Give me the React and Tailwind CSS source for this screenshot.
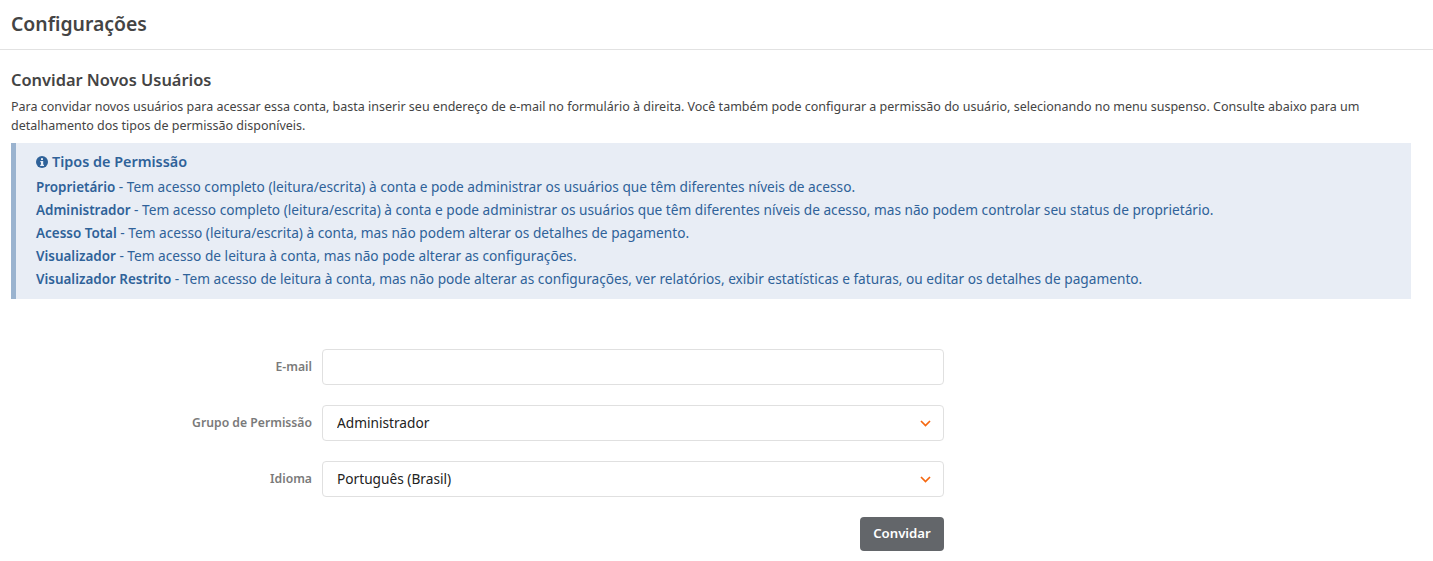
import React from 'react';

const permissions = [
    ['Proprietário', ' - Tem acesso completo (leitura/escrita) à conta e pode administrar os usuários que têm diferentes níveis de acesso.'],
    ['Administrador', ' - Tem acesso completo (leitura/escrita) à conta e pode administrar os usuários que têm diferentes níveis de acesso, mas não podem controlar seu status de proprietário.'],
    ['Acesso Total', ' - Tem acesso (leitura/escrita) à conta, mas não podem alterar os detalhes de pagamento.'],
    ['Visualizador', ' - Tem acesso de leitura à conta, mas não pode alterar as configurações.'],
    ['Visualizador Restrito', ' - Tem acesso de leitura à conta, mas não pode alterar as configurações, ver relatórios, exibir estatísticas e faturas, ou editar os detalhes de pagamento.'],
];

function Chevron() {
    return (
        <svg className="absolute right-[13px] top-[15px] pointer-events-none" width="11" height="7" viewBox="0 0 11 7" fill="none">
            <path d="M1 1L5.5 5.5L10 1" stroke="#f5670f" strokeWidth="1.7" />
        </svg>
    );
}

function Row({ label, children }) {
    return (
        <div className="flex items-start mb-5">
            <label className="w-[322px] pr-[10px] text-right text-[12.2px] font-semibold text-[#7a7a7a] leading-[36px]">{label}</label>
            <div className="relative w-[622px]">{children}</div>
        </div>
    );
}

export default function App() {
    const fieldClass = "w-full h-9 px-[14px] border border-[#e0e0e0] rounded-[4px] bg-white text-[13.7px] text-[#222] appearance-none outline-none";

    return (
        <div className="min-h-[561px] bg-white text-[#444] font-['Noto_Sans',sans-serif]">
            <div className="h-[50px] px-[11px] border-b border-[#e2e2e2]">
                <h1 className="text-[19.4px] font-semibold leading-[48px] text-[#444]">Configurações</h1>
            </div>

            <div className="pl-[11px] pr-[22px] pt-[19px]">
                <h2 className="text-[16.4px] font-semibold leading-[22px] text-[#444]">Convidar Novos Usuários</h2>
                <p className="mt-[6px] text-[12.5px] leading-[19px] text-[#444]">
                    Para convidar novos usuários para acessar essa conta, basta inserir seu endereço de e-mail no formulário à direita. Você também pode configurar a permissão do usuário, selecionando no menu suspenso. Consulte abaixo para um detalhamento dos tipos de permissão disponíveis.
                </p>

                <div className="mt-2 h-[156px] pl-5 pt-[9px] border-l-[5px] border-[#9ab3cf] bg-[#e8edf5] text-[#2f6299]">
                    <h3 className="flex items-center gap-[4px] text-[14.4px] font-semibold leading-5">
                        <svg width="12" height="12" viewBox="0 0 12 12">
                            <circle cx="6" cy="6" r="6" fill="#2f6299" />
                            <rect x="5" y="2.2" width="2" height="1.8" fill="#e8edf5" />
                            <path d="M4.3 5h2.9v3.8h.8V10H4.2V8.8H5V6.2h-.7z" fill="#e8edf5" />
                        </svg>
                        Tipos de Permissão
                    </h3>
                    <div className="mt-[3px]">
                        {permissions.map(([name, text]) => (
                            <p key={name} className="text-[13.68px] leading-[23px]">
                                <strong className="text-[13.45px] leading-none font-semibold">{name}</strong>{text}
                            </p>
                        ))}
                    </div>
                </div>
            </div>

            <form className="pt-[50px]" onSubmit={e => e.preventDefault()}>
                <Row label="E-mail">
                    <input type="email" className={fieldClass} />
                </Row>
                <Row label="Grupo de Permissão">
                    <select className={fieldClass} defaultValue="Administrador">
                        <option>Administrador</option>
                        <option>Proprietário</option>
                        <option>Acesso Total</option>
                        <option>Visualizador</option>
                        <option>Visualizador Restrito</option>
                    </select>
                    <Chevron />
                </Row>
                <Row label="Idioma">
                    <select className={fieldClass} defaultValue="Português (Brasil)">
                        <option>Português (Brasil)</option>
                        <option>English</option>
                    </select>
                    <Chevron />
                </Row>
                <div className="w-[944px] flex justify-end">
                    <button type="submit" className="w-[84px] h-[34px] rounded-[4px] bg-[#63666a] text-white text-[13.2px] font-semibold">Convidar</button>
                </div>
            </form>
        </div>
    );
}
